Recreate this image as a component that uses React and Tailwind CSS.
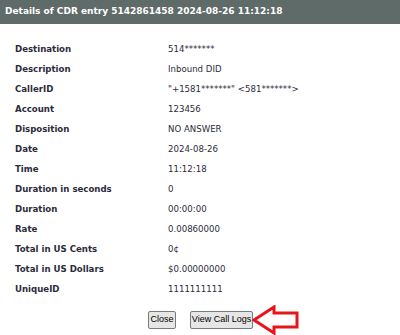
import React from "react";

const rows = [
  ["Destination", "514*******"],
  ["Description", "Inbound DID"],
  ["CallerID", "\"+1581*******\" <581*******>"],
  ["Account", "123456"],
  ["Disposition", "NO ANSWER"],
  ["Date", "2024-08-26"],
  ["Time", "11:12:18"],
  ["Duration in seconds", "0"],
  ["Duration", "00:00:00"],
  ["Rate", "0.00860000"],
  ["Total in US Cents", "0¢"],
  ["Total in US Dollars", "$0.00000000"],
  ["UniqueID", "1111111111"],
];

export default function App() {
  return (
    <div className="w-[400px] h-[335px] bg-white overflow-hidden font-['DejaVu_Sans',sans-serif]">
      {/* title bar */}
      <div className="h-[24px] bg-[#5f6b68] flex items-center pl-[5px]">
        <h1 className="text-white font-bold text-[9px]">
          Details of CDR entry 5142861458 2024-08-26 11:12:18
        </h1>
      </div>

      {/* details */}
      <div className="pt-[15px] pl-[15px] grid grid-cols-[153px_1fr] text-[8.6px] text-[#2b2b3a]">
        {rows.map(([label, value]) => (
          <React.Fragment key={label}>
            <div className="h-[20px] flex items-center font-bold">{label}</div>
            <div className="h-[20px] flex items-center">{value}</div>
          </React.Fragment>
        ))}
      </div>

      {/* buttons */}
      <div className="mt-[6px] flex items-center pl-[148px] font-['Liberation_Sans',sans-serif]">
        <button className="h-[18px] w-[28px] text-[9px] text-black bg-[#e6e6e6] border border-[#7a7a7a] rounded-[2px]">
          Close
        </button>
        <button className="ml-[14px] h-[18px] w-[63px] text-[9px] text-black bg-[#e6e6e6] border border-[#7a7a7a] rounded-[2px]">
          View Call Logs
        </button>
        <svg width="48" height="30" viewBox="0 0 48 30" className="-ml-[1px]">
          <path
            d="M2 15 L22 2 L22 8 L45 8 L45 22 L22 22 L22 28 Z"
            fill="none"
            stroke="#e8141b"
            strokeWidth="3"
            strokeLinejoin="miter"
          />
        </svg>
      </div>
    </div>
  );
}
